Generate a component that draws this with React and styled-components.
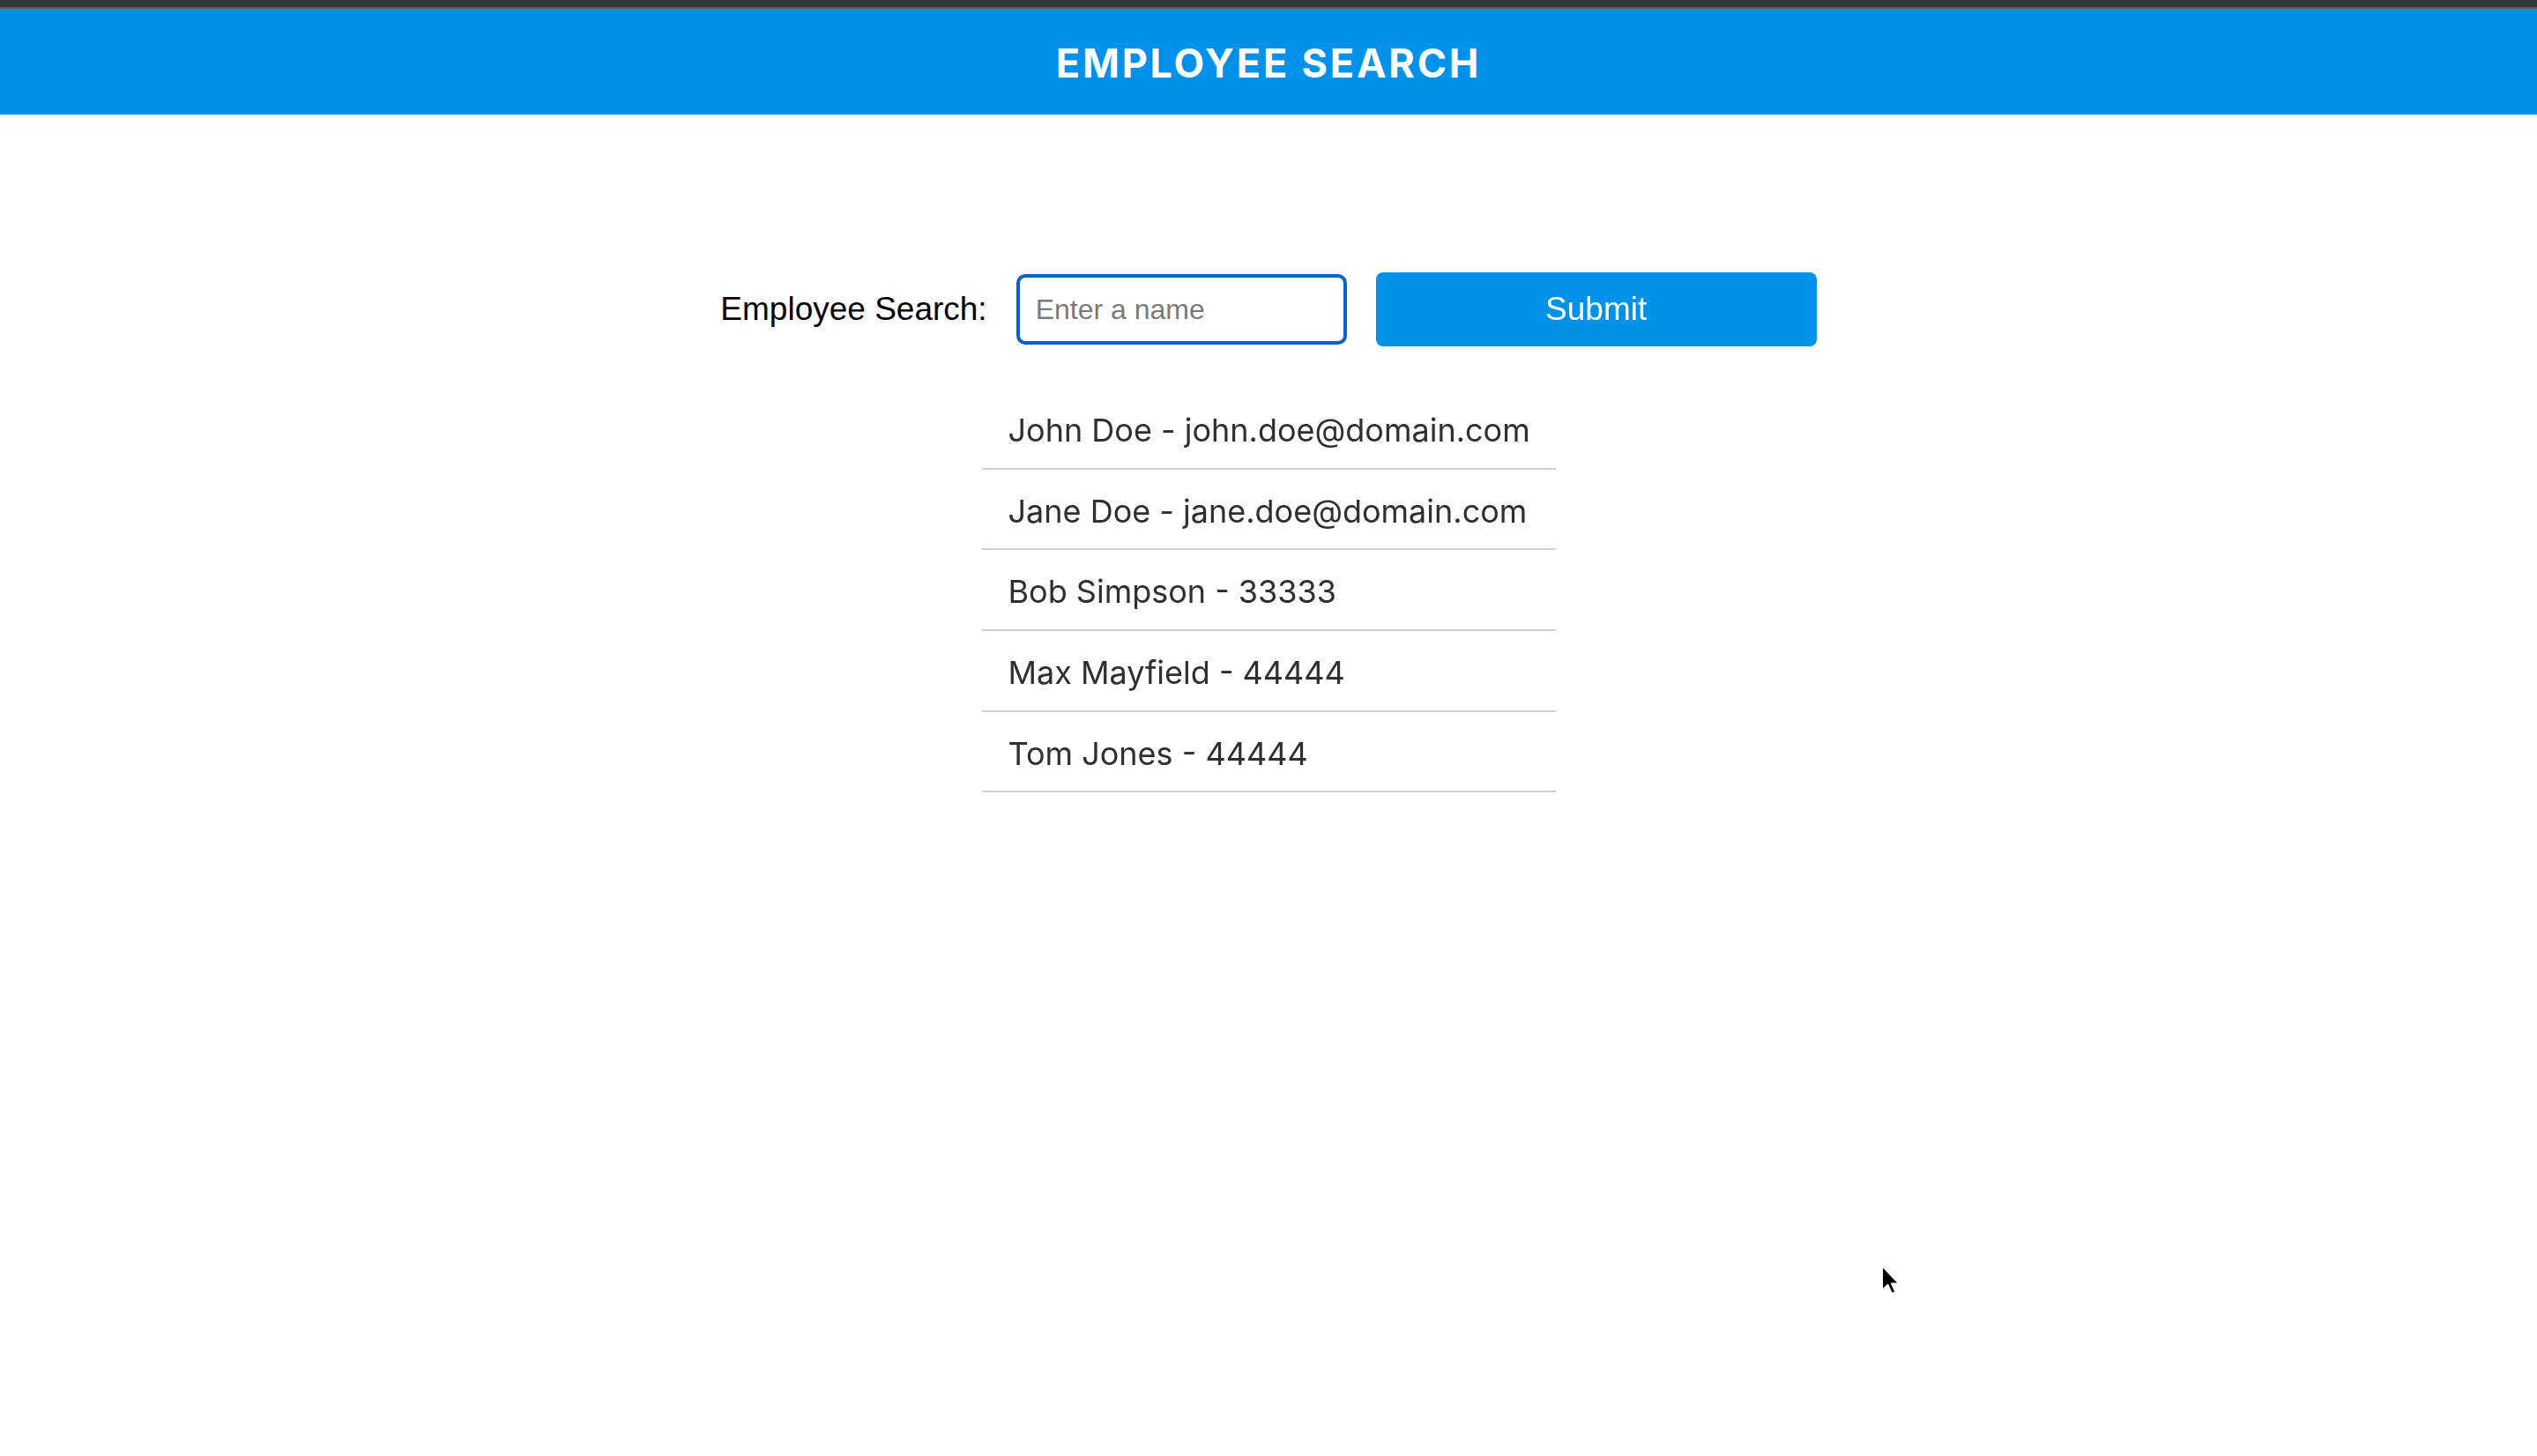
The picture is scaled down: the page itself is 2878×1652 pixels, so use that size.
import React from "react";
import styled, { createGlobalStyle } from "styled-components";

const GlobalStyle = createGlobalStyle`
  html, body {
    margin: 0;
    padding: 0;
    background: #ffffff;
  }
  body {
    font-family: "Liberation Sans", Arial, sans-serif;
    min-height: 1652px;
    position: relative;
    overflow: hidden;
  }
`;

const Page = styled.div`
  display: flex;
  flex-direction: column;
  min-height: 1652px;
`;

const ChromeBar = styled.div`
  height: 8px;
  background: #333539;
  border-bottom: 2px solid #5a5c60;
`;

const Header = styled.header`
  box-sizing: border-box;
  height: 120px;
  padding-top: 3px;
  background: #0091ea;
  display: flex;
  align-items: center;
  justify-content: center;
`;

const Title = styled.h1`
  margin: 0;
  font-family: Inter, "Noto Sans", sans-serif;
  font-weight: 700;
  font-size: 45px;
  letter-spacing: 2.8px;
  color: #ffffff;
`;

const Main = styled.main`
  display: flex;
  flex-direction: column;
  align-items: center;
  padding-top: 179px;
  gap: 48px;
`;

const SearchForm = styled.form`
  display: flex;
  align-items: center;
  gap: 33px;
`;

const Label = styled.label`
  font-family: "Liberation Sans", Arial, sans-serif;
  font-size: 37px;
  color: #000000;
`;

const Input = styled.input`
  box-sizing: border-box;
  width: 375px;
  height: 80px;
  border: 4px solid #0c5fcd;
  border-radius: 10px;
  padding: 0 18px;
  font-family: "Liberation Sans", Arial, sans-serif;
  font-size: 32px;
  color: #222;
  outline: none;
  &::placeholder {
    color: #7a7a7a;
  }
`;

const Button = styled.button`
  box-sizing: border-box;
  width: 500px;
  height: 84px;
  border: none;
  border-radius: 8px;
  background: #0091ea;
  color: #ffffff;
  font-family: "Liberation Sans", Arial, sans-serif;
  font-size: 37px;
  cursor: pointer;
`;

const List = styled.ul`
  list-style: none;
  margin: 0;
  padding: 0;
  width: 651px;
`;

const Item = styled.li`
  box-sizing: border-box;
  height: 91.7px;
  display: flex;
  align-items: center;
  padding-left: 30px;
  padding-top: 4px;
  border-bottom: 2px solid #cfcfcf;
  font-family: Inter, "Noto Sans", sans-serif;
  font-size: 36px;
  color: #2f2f2f;
`;

const Pointer = styled.svg`
  position: absolute;
  left: 2132px;
  top: 1434px;
  width: 26px;
  height: 38px;
`;

const employees = [
  "John Doe - john.doe@domain.com",
  "Jane Doe - jane.doe@domain.com",
  "Bob Simpson - 33333",
  "Max Mayfield - 44444",
  "Tom Jones - 44444",
];

export default function App() {
  return (
    <>
      <GlobalStyle />
      <Page>
        <ChromeBar />
        <Header>
          <Title>EMPLOYEE SEARCH</Title>
        </Header>
        <Main>
          <SearchForm onSubmit={(e) => e.preventDefault()}>
            <Label htmlFor="emp">Employee Search:</Label>
            <Input id="emp" type="text" placeholder="Enter a name" autoFocus />
            <Button type="submit">Submit</Button>
          </SearchForm>
          <List>
            {employees.map((e) => (
              <Item key={e}>{e}</Item>
            ))}
          </List>
        </Main>
      </Page>
      <Pointer viewBox="0 0 26 38">
        <path
          d="M3 2 L3 30 L9.5 24 L14 34 L18.5 32 L14 22.5 L22.5 22.5 Z"
          fill="#000"
          stroke="#fff"
          strokeWidth="2"
          strokeLinejoin="round"
        />
      </Pointer>
    </>
  );
}
